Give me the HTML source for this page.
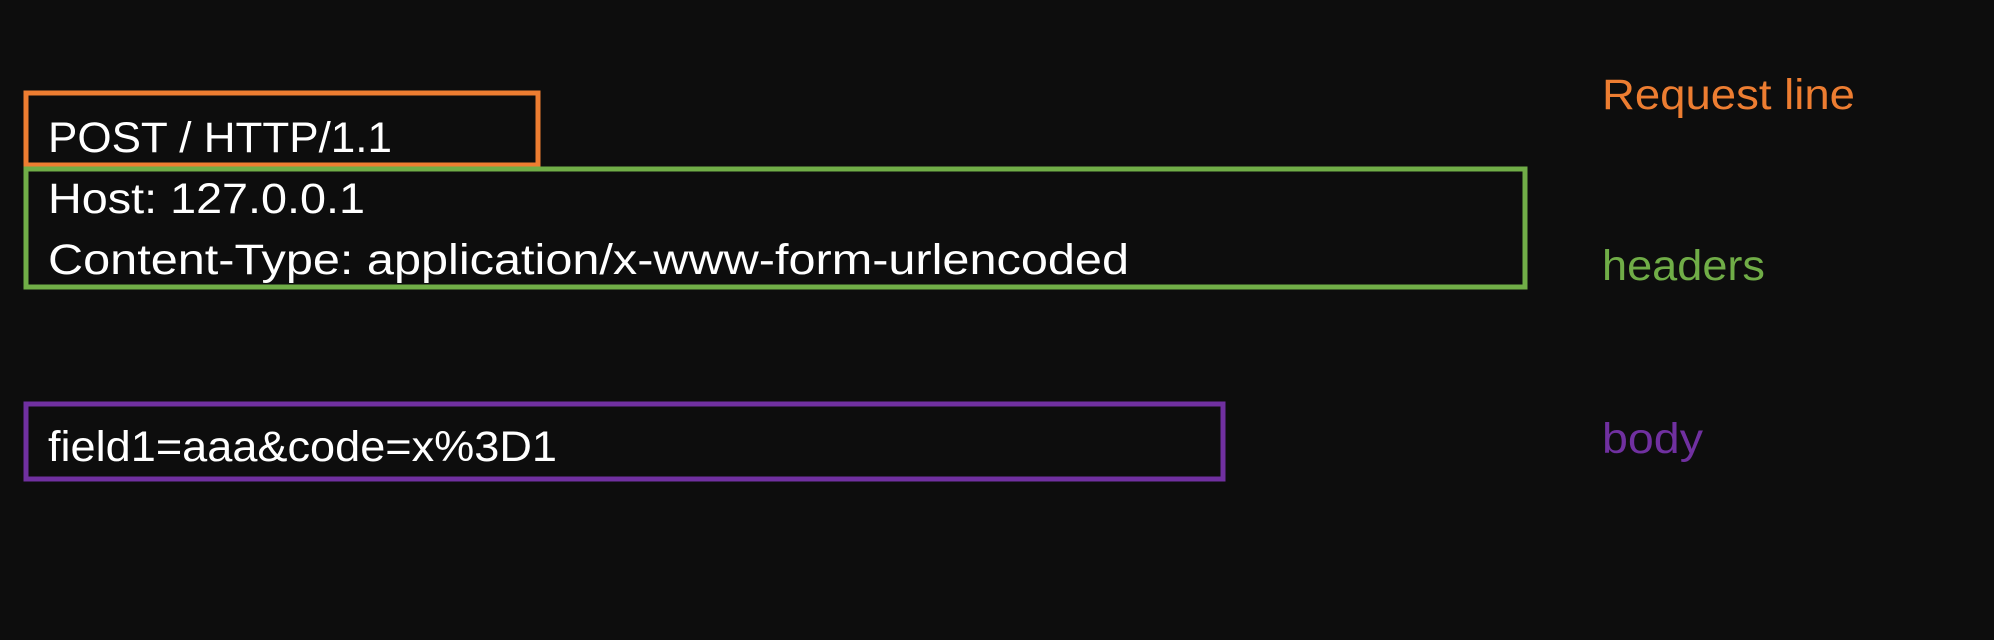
<!DOCTYPE html>
<html><head><style>html,body{margin:0;padding:0;background:#0d0d0d;}svg{display:block}</style></head>
<body>
<svg width="1994" height="640" xmlns="http://www.w3.org/2000/svg" font-family="Liberation Sans, sans-serif" font-size="43">
<rect width="1994" height="640" fill="#0d0d0d"/>
<rect x="26" y="93" width="512" height="72" fill="none" stroke="#ED7D31" stroke-width="5"/>
<rect x="26" y="169" width="1499" height="118" fill="none" stroke="#70AD47" stroke-width="5"/>
<rect x="26" y="404" width="1197" height="75" fill="none" stroke="#7030A0" stroke-width="5"/>
<g fill="#ffffff">
<text x="48" y="152" textLength="344" lengthAdjust="spacingAndGlyphs">POST / HTTP/1.1</text>
<text x="48" y="213" textLength="317" lengthAdjust="spacingAndGlyphs">Host: 127.0.0.1</text>
<text x="48" y="274" textLength="1081" lengthAdjust="spacingAndGlyphs">Content-Type: application/x-www-form-urlencoded</text>
<text x="48" y="461" textLength="509" lengthAdjust="spacingAndGlyphs">field1=aaa&amp;code=x%3D1</text>
</g>
<text x="1602" y="109" fill="#ED7D31" textLength="253" lengthAdjust="spacingAndGlyphs">Request line</text>
<text x="1602" y="280" fill="#70AD47" textLength="163" lengthAdjust="spacingAndGlyphs">headers</text>
<text x="1602" y="453" fill="#7030A0" textLength="101" lengthAdjust="spacingAndGlyphs">body</text>
</svg>
</body></html>
